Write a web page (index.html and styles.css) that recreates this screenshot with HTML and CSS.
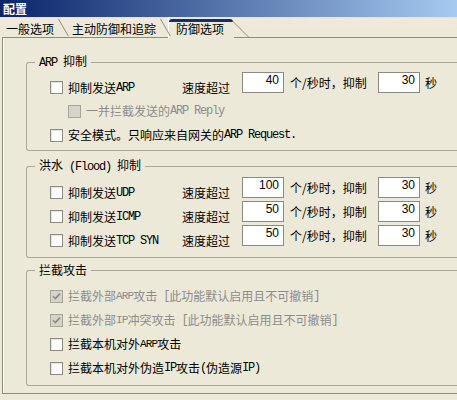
FILE: index.html
```html
<!DOCTYPE html>
<html lang="zh-CN">
<head>
<meta charset="utf-8">
<title>配置</title>
<link rel="stylesheet" href="styles.css">
</head>
<body>
<div class="titlebar">配置</div>
<div class="tabs">
  <div class="tab t1">一般选项</div>
  <div class="tab t2">主动防御和追踪</div>
  <div class="tab active">防御选项</div>
</div>
<div class="panel">
  <fieldset class="group g1">
    <legend><span class="en">ARP </span>抑制</legend>
    <div class="body">
      <div class="row">
        <label class="lead"><span class="cb"></span>抑制发送<span class="en">ARP</span></label>
        <span class="speed">速度超过</span>
        <input class="num" value="40" readonly>
        <span class="unit">个/秒时，抑制</span>
        <input class="num" value="30" readonly>
        <span class="sec">秒</span>
      </div>
      <div class="row sub">
        <label class="opt disabled"><span class="cb dis"></span>一并拦截发送的<span class="en">ARP Reply</span></label>
      </div>
      <div class="row r3">
        <label class="opt"><span class="cb"></span>安全模式。只响应来自网关的<span class="en">ARP Request.</span></label>
      </div>
    </div>
  </fieldset>

  <fieldset class="group g2">
    <legend>洪水<span class="en"> (Flood) </span>抑制</legend>
    <div class="body">
      <div class="row">
        <label class="lead"><span class="cb"></span>抑制发送<span class="en">UDP</span></label>
        <span class="speed">速度超过</span>
        <input class="num" value="100" readonly>
        <span class="unit">个/秒时，抑制</span>
        <input class="num" value="30" readonly>
        <span class="sec">秒</span>
      </div>
      <div class="row">
        <label class="lead"><span class="cb"></span>抑制发送<span class="en">ICMP</span></label>
        <span class="speed">速度超过</span>
        <input class="num" value="50" readonly>
        <span class="unit">个/秒时，抑制</span>
        <input class="num" value="30" readonly>
        <span class="sec">秒</span>
      </div>
      <div class="row">
        <label class="lead"><span class="cb"></span>抑制发送<span class="en">TCP SYN</span></label>
        <span class="speed">速度超过</span>
        <input class="num" value="50" readonly>
        <span class="unit">个/秒时，抑制</span>
        <input class="num" value="30" readonly>
        <span class="sec">秒</span>
      </div>
    </div>
  </fieldset>

  <fieldset class="group g3">
    <legend>拦截攻击</legend>
    <div class="body">
      <div class="row">
        <label class="opt disabled"><span class="cb dis"><svg width="9" height="9" viewBox="0 0 9 9"><path d="M1 4.2 L3.4 6.6 L8 1.6" fill="none" stroke="#8a8a84" stroke-width="1.6"/></svg></span>拦截外部<span class="en sm">ARP</span>攻击<span class="en"> [</span>此功能默认启用且不可撤销<span class="en">]</span></label>
      </div>
      <div class="row">
        <label class="opt disabled"><span class="cb dis"><svg width="9" height="9" viewBox="0 0 9 9"><path d="M1 4.2 L3.4 6.6 L8 1.6" fill="none" stroke="#8a8a84" stroke-width="1.6"/></svg></span>拦截外部<span class="en sm">IP</span>冲突攻击<span class="en"> [</span>此功能默认启用且不可撤销<span class="en">]</span></label>
      </div>
      <div class="row">
        <label class="opt"><span class="cb"></span>拦截本机对外<span class="en sm">ARP</span>攻击</label>
      </div>
      <div class="row">
        <label class="opt"><span class="cb"></span>拦截本机对外伪造<span class="en">IP</span>攻击<span class="en">(</span>伪造源<span class="en">IP)</span></label>
      </div>
    </div>
  </fieldset>
</div>
</body>
</html>
```

FILE: styles.css
```css
* { box-sizing: border-box; }

html, body {
  margin: 0;
  padding: 0;
}

body {
  width: 457px;
  height: 400px;
  overflow: hidden;
  background: #ece9d8;
  font-family: "Noto Sans CJK SC", sans-serif;
  font-size: 12px;
  line-height: 14px;
  color: #000;
}

.en {
  font-family: "Liberation Mono", "Noto Sans CJK SC", monospace;
  font-size: 12px;
  letter-spacing: -1.2px;
  white-space: pre;
}

.en.sm {
  font-size: 11px;
  letter-spacing: -0.9px;
}

/* title bar */
.titlebar {
  height: 17px;
  padding-left: 3px;
  line-height: 17px;
  font-weight: bold;
  color: #fff;
  background: linear-gradient(to right, #0a246a, #a6caf0);
}

/* tabs */
.tabs {
  display: flex;
  height: 20px;
  background: linear-gradient(#e2ead6 0, #e2ead6 1px, #f3e7df 2px, #ece9d8 12px);
}

.tab {
  position: relative;
  height: 20px;
  padding-top: 3px;
  line-height: 18px;
  white-space: nowrap;
}

.tab::after {
  content: "";
  position: absolute;
  top: 2px;
  width: 1px;
  height: 17px;
  background: #8f8d80;
  transform-origin: 0 0;
  transform: skewX(30deg);
  z-index: 2;
}

.t1 { width: 62px; padding-left: 6px; }
.t1::after { left: 58px; }

.t2 { width: 106px; padding-left: 10px; }
.t2::after { left: 98px; }

.tab.active {
  width: 66px;
  height: 21px;
  padding-left: 8px;
  background: #ece9d8;
  z-index: 1;
  box-shadow: inset 1px 0 0 #fff;
}

.tab.active::before {
  content: "";
  position: absolute;
  left: 1px;
  top: 2px;
  width: 64px;
  height: 3px;
  background: #1c2b63;
  border-radius: 3px 3px 0 0;
}

.tab.active::after {
  left: 64px;
  top: 4px;
  height: 16px;
  transform: skewX(45deg);
}

/* panel */
.panel {
  height: 357px;
  margin-left: 2px;
  padding: 16px 0 0 23px;
  border: 1px solid #8e8c80;
  border-right: none;
  box-shadow: inset 1px 0 0 #fff;
}

.group {
  margin: 0;
  padding: 0;
  min-width: 0;
  border: 1px solid #aaa89a;
  border-right: none;
  border-radius: 3px 0 0 3px;
}

.group legend {
  margin-left: 8px;
  padding: 0 4px;
  line-height: 14px;
}

.body {
  padding-left: 23px;
}

.g1 .body { padding-top: 2px; padding-bottom: 5px; }
.g2 { margin-top: 7px; }
.g2 .body { padding-top: 3px; padding-bottom: 11px; }
.g3 { margin-top: 5px; }
.g3 .body { padding-top: 9px; padding-bottom: 7px; }

.row {
  display: flex;
  align-items: center;
  height: 21px;
  white-space: nowrap;
}

.g1 .sub { margin-top: 8px; height: 20px; padding-left: 18px; }
.g1 .r3 { margin-top: 4px; height: 20px; }
.g2 .row + .row { margin-top: 3px; }
.g3 .row { height: 20px; }
.g3 .row + .row { margin-top: 4px; }

.lead {
  display: flex;
  align-items: center;
  width: 132px;
  padding-top: 10px;
}

.opt {
  display: flex;
  align-items: center;
}

.disabled { color: #8c8c8c; }

.speed {
  width: 60px;
  padding-top: 10px;
}

.unit {
  width: 88px;
  margin-left: 6px;
}

.sec { margin-left: 5px; }

.num {
  width: 42px;
  height: 21px;
  margin: 0;
  padding: 0 4px 6px 0;
  border: 1px solid #8a8a84;
  background: #fff;
  text-align: right;
  font-family: "Liberation Sans", sans-serif;
  font-size: 12px;
  color: #000;
  outline: none;
}

.cb {
  display: flex;
  align-items: center;
  justify-content: center;
  flex-shrink: 0;
  width: 13px;
  height: 13px;
  margin-right: 5px;
  border: 1px solid #8c8c86;
  background: #fff;
  box-shadow: inset 1px 1px 0 #e4e4e0;
}

.cb.dis {
  background: #d6d3ca;
  border-color: #a6a59c;
  box-shadow: none;
}
```
